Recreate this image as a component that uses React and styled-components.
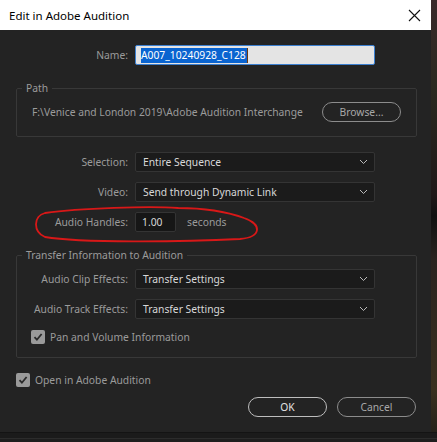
import React from 'react';
import styled, {createGlobalStyle} from 'styled-components';

const Global = createGlobalStyle`
  html, body { margin:0; padding:0; background:#1c1c1c; }
  body { font-family:"Noto Sans","Open Sans",sans-serif; font-size:10.3px; }
`;

const Page = styled.div`
  width:437px; height:442px; overflow:hidden;
  display:flex; flex-direction:column; background:#1a1a1a;
`;
const Top = styled.div`
  display:flex; height:432px;
`;
const Backdrop = styled.div`
  flex:1;
  background:linear-gradient(180deg,#3a2a2a 0%,#2a2a20 20%,#201818 45%,#101010 50%,#2a2420 60%,#3a3020 90%,#25221a 100%);
`;
const Bottom = styled.div`
  flex:1; background:#1b1b1b;
  border-top:1px solid #141414;
  box-shadow: inset 0 -3px 0 #1e1e1e, inset 0 -4px 0 #2c2c2c;
`;
const Dialog = styled.div`
  width:431px; display:flex; flex-direction:column; background:#232323;
  position:relative;
`;
const TitleBar = styled.div`
  height:30px; background:#fff; display:flex; align-items:center;
  justify-content:space-between; padding:0 10px 0 9px;
  font-size:11.5px; color:#000;
`;
const Body = styled.div`
  padding:15px 15px 0 16px; display:flex; flex-direction:column;
  color:#9b9b9b; position:relative; flex:1;
`;
const Row = styled.div`
  display:grid; grid-template-columns:${p=>p.$label||112}px auto 1fr;
  column-gap:7px; align-items:center; height:20px;
  margin-top:${p=>p.$mt||0}px;
`;
const Label = styled.div`
  text-align:right; white-space:nowrap;
`;
const NameInput = styled.div`
  width:233px; height:18px; background:#e4e4e4; border:1px solid #3b7fd0;
  border-radius:2px; display:flex; align-items:center; padding-left:5px;
`;
const Selected = styled.span`
  background:#0a64d0; color:#fff; line-height:15px; padding-right:1px;
  border-right:1px solid #6a3a10;
`;
const Group = styled.fieldset`
  margin:${p=>p.$mt||0}px 0 0 0; padding:${p=>p.$pad};
  border:1px solid #383838; border-radius:2px;
  width:399px; box-sizing:content-box;
`;
const Legend = styled.legend`
  padding:0 4px; margin-left:5px; color:#9b9b9b; line-height:14px;
`;
const PathRow = styled.div`
  display:flex; align-items:center; justify-content:space-between;
  padding:0 15px 0 15px; height:20px;
`;
const Pill = styled.button`
  width:${p=>p.$w||79}px; height:20px; border-radius:10px;
  background:transparent; color:${p=>p.$bright?'#e2e2e2':'#a8a8a8'};
  border:1px solid ${p=>p.$bright?'#bdbdbd':'#8c8c8c'};
  font-family:inherit; font-size:10.3px; padding:0;
`;
const Select = styled.div`
  height:18px; background:#1b1b1b; border:1px solid #343434;
  border-radius:2px; display:flex; align-items:center; justify-content:space-between;
  padding:0 6px 0 7px; box-sizing:content-box; width:225px; color:#d8d8d8;
`;
const SmallInput = styled.div`
  height:18px; background:#161616; border:1px solid #343434;
  border-radius:2px; display:flex; align-items:center; padding-left:6px;
  color:#d8d8d8; box-sizing:content-box; width:33px;
`;
const Unit = styled.span`
  margin-left:4px;
`;
const CheckRow = styled.label`
  display:flex; align-items:center; gap:5px; height:15px;
  margin:${p=>p.$m};
`;
const Box = styled.span`
  width:14px; height:14px; border-radius:2px; background:#9a9a9a;
  display:flex; align-items:center; justify-content:center;
`;
const Buttons = styled.div`
  display:flex; justify-content:flex-end; gap:10px; margin-top:10px;
`;
const Scribble = styled.svg`
  position:absolute; left:0; top:0; pointer-events:none;
`;

const Chevron = () => (
  <svg width="9" height="6" viewBox="0 0 9 6"><path d="M1 1l3.5 3.5L8 1" fill="none" stroke="#bbb" strokeWidth="1"/></svg>
);
const Check = () => (
  <svg width="10" height="10" viewBox="0 0 10 10"><path d="M1.5 5.2l2.4 2.5L8.6 2" fill="none" stroke="#2a2a2a" strokeWidth="1.8"/></svg>
);

export default function App() {
  return (
    <Page>
      <Global/>
      <Top>
        <Dialog>
          <TitleBar>
            <span>Edit in Adobe Audition</span>
            <svg width="13" height="13" viewBox="0 0 13 13"><path d="M1 1l11 11M12 1L1 12" stroke="#111" strokeWidth="1.1"/></svg>
          </TitleBar>
          <Body>
            <Row>
              <Label>Name:</Label>
              <NameInput><Selected>A007_10240928_C128</Selected></NameInput>
            </Row>
            <Group $mt={16} $pad="7px 0 14px 0">
              <Legend>Path</Legend>
              <PathRow>
                <span>F:\Venice and London 2019\Adobe Audition Interchange</span>
                <Pill>Browse...</Pill>
              </PathRow>
            </Group>
            <Row $mt={15}>
              <Label>Selection:</Label>
              <Select>Entire Sequence<Chevron/></Select>
            </Row>
            <Row $mt={10}>
              <Label>Video:</Label>
              <Select>Send through Dynamic Link<Chevron/></Select>
            </Row>
            <Row $mt={10}>
              <Label>Audio Handles:</Label>
              <SmallInput>1.00</SmallInput>
              <Unit>seconds</Unit>
            </Row>
            <Group $mt={16} $pad="0 0 13px 0">
              <Legend>Transfer Information to Audition</Legend>
              <Row $label={111} $mt={7}>
                <Label>Audio Clip Effects:</Label>
                <Select>Transfer Settings<Chevron/></Select>
              </Row>
              <Row $label={111} $mt={10}>
                <Label>Audio Track Effects:</Label>
                <Select>Transfer Settings<Chevron/></Select>
              </Row>
              <CheckRow $m="10px 0 0 14px"><Box><Check/></Box>Pan and Volume Information</CheckRow>
            </Group>
            <CheckRow $m="14px 0 0 0"><Box><Check/></Box>Open in Adobe Audition</CheckRow>
            <Buttons>
              <Pill $bright>OK</Pill>
              <Pill>Cancel</Pill>
            </Buttons>
            <Scribble width="431" height="402" viewBox="0 30 431 402">
              <path d="M178 208 C150 206 80 208 45 213 C33 216 33 232 45 237 C80 243 180 242 240 239 C262 237 262 224 244 218 C225 211 205 208 178 208"
                fill="none" stroke="#d81818" strokeWidth="1.8" strokeLinecap="round"/>
            </Scribble>
          </Body>
        </Dialog>
        <Backdrop/>
      </Top>
      <Bottom/>
    </Page>
  );
}
